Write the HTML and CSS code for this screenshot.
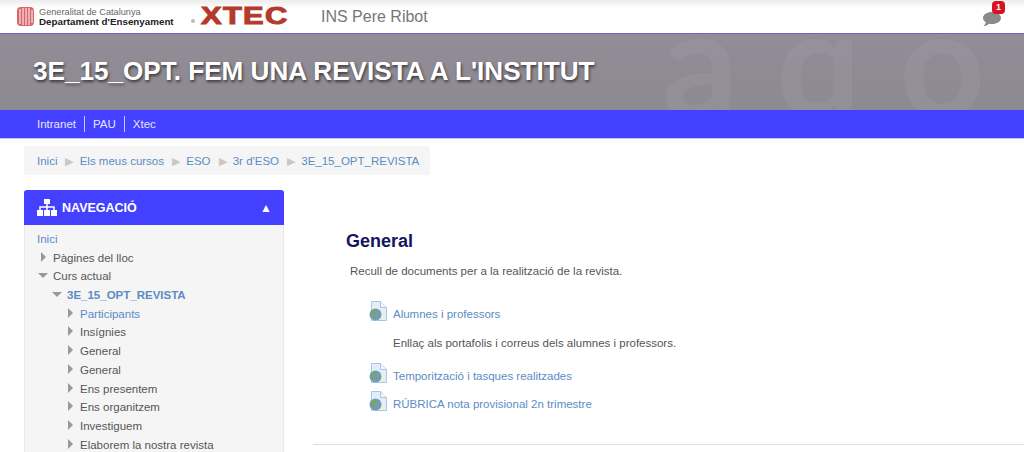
FILE: index.html
```html
<!DOCTYPE html>
<html>
    <head>
        <meta name="viewport" content="width=device-width">
        <title>3E_15_OPT. Fem una revista a l'institut</title>
        <link rel="stylesheet" href="styles.css">
    </head>
    <body>
        <div class="topbar">
            <svg class="gene-logo" width="17" height="19" viewBox="0 0 17 19">
                <rect x="0" y="0" width="17" height="19" rx="4" fill="#d9646a"/>
                <path d="M3 2v15M6 1v17M9 1v17M12 1v17M15 3v13" stroke="#fff" stroke-width="1" fill="none"/>
            </svg>
            <div class="gene-text">
                <div>Generalitat de Catalunya</div>
                <div class="gene-dept">Departament d'Ensenyament</div>
            </div>
            <span class="xtec-dot"></span>
            <div class="xtec-logo">XTEC</div>
            <div class="school">INS Pere Ribot</div>
            <div class="notif">
                <svg width="22" height="18" viewBox="0 0 22 18">
                    <path d="M11 3c5 0 9 2.600 9 6s-4 6-9 6c-1 0-2 0-3-.3-1.500 1.500-3.500 2.300-5.500 2.300 1.200-1 2-2.200 2.300-3.700C3 12 2 10.600 2 9c0-3.400 4-6 9-6z" fill="#8a8a8a"/>
                </svg>
                <span class="notif-badge">1</span>
            </div>
        </div>

        <div class="banner">
            <h1>3E_15_OPT. FEM UNA REVISTA A L'INSTITUT</h1>
            <div class="banner-deco" aria-hidden="true">
                <span>a</span><span>ɑ</span><span>o</span>
            </div>
        </div>

        <div class="nav">
            <a href="#">Intranet</a>
            <a href="#">PAU</a>
            <a href="#">Xtec</a>
        </div>

        <div class="breadcrumb">
            <a href="#">Inici</a><span class="sep">&#9654;</span>
            <a href="#">Els meus cursos</a><span class="sep">&#9654;</span>
            <a href="#">ESO</a><span class="sep">&#9654;</span>
            <a href="#">3r d'ESO</a><span class="sep">&#9654;</span>
            <a href="#">3E_15_OPT_REVISTA</a>
        </div>

        <div class="page">
            <div class="block">
                <div class="block-head">
                    <svg width="20" height="17" viewBox="0 0 20 17">
                        <path d="M7 0h6v5H7zM0 11h6v6H0zM7 11h6v6H7zM14 11h6v6h-6z" fill="#fff"/>
                        <path d="M10 5v6M3 11V8h14v3" stroke="#fff" stroke-width="1.500" fill="none"/>
                    </svg>
                    <span class="block-title">NAVEGACIÓ</span>
                    <span class="block-toggle">&#9650;</span>
                </div>
                <ul class="tree">
                    <li class="home"><a href="#">Inici</a></li>
                    <li class="closed">Pàgines del lloc</li>
                    <li class="open">Curs actual</li>
                    <li class="open lvl2 course"><a href="#">3E_15_OPT_REVISTA</a></li>
                    <li class="closed lvl3"><a href="#">Participants</a></li>
                    <li class="closed lvl3">Insígnies</li>
                    <li class="closed lvl3">General</li>
                    <li class="closed lvl3">General</li>
                    <li class="closed lvl3">Ens presentem</li>
                    <li class="closed lvl3">Ens organitzem</li>
                    <li class="closed lvl3">Investiguem</li>
                    <li class="closed lvl3">Elaborem la nostra revista</li>
                </ul>
            </div>

            <div class="main">
                <h2>General</h2>
                <p class="summary">Recull de documents per a la realització de la revista.</p>
                <div class="activity first">
                    <svg class="url-icon" width="18" height="20"><use href="#url"/></svg>
                    <a href="#">Alumnes i professors</a>
                </div>
                <p class="activity-desc">Enllaç als portafolis i correus dels alumnes i professors.</p>
                <div class="activity">
                    <svg class="url-icon" width="18" height="20"><use href="#url"/></svg>
                    <a href="#">Temporització i tasques realitzades</a>
                </div>
                <div class="activity">
                    <svg class="url-icon" width="18" height="20"><use href="#url"/></svg>
                    <a href="#">RÚBRICA nota provisional 2n trimestre</a>
                </div>
                <div class="main-rule"></div>
            </div>
        </div>

        <svg width="0" height="0" class="defs">
            <symbol id="url" viewBox="0 0 18 20">
                <path d="M2.500.500h9l6 6v13h-15z" fill="#e4eef8" stroke="#a9c6e4"/>
                <path d="M11.500.500v6h6" fill="#f4f8fc" stroke="#a9c6e4"/>
                <circle cx="6.500" cy="13.500" r="6" fill="#6f9cc4"/>
                <path d="M3 10c2-1.500 4-1.500 5.500-.5L7 12l-2 .5 1 3-1.500 2C2.500 16 1.500 12.500 3 10zM9 14l3-1c0 2-1 4-2.500 5z" fill="#7fa25c"/>
            </symbol>
        </svg>
    </body>
</html>
```

FILE: styles.css
```css
html,body{height:452px}
body{
    margin:0;
    font-family:"Liberation Sans",Arial,sans-serif;
    font-size:11.500px;
    color:#555;
    background:#fff;
    overflow:hidden;
}
a{color:#5b8cc4;text-decoration:none}

.topbar
{
    display:flex;
    align-items:center;
    height:33px;
    background:linear-gradient(#ececec,#fff 25%,#fff);
    border-bottom:1px solid #6a64c0;
}
.gene-logo{margin-left:17px;margin-right:5px;flex:none}
.gene-text{font-size:9.200px;line-height:9px;color:#666;width:151px;flex:none;white-space:nowrap}
.gene-dept{font-weight:bold;color:#222;font-size:9.800px}
.xtec-dot{width:4px;height:4px;border-radius:2px;background:#bbb;margin-left:1px;margin-top:9px;flex:none}
.xtec-logo
{
    font-size:23px;
    line-height:23px;
    font-weight:bold;
    color:#b33a2c;
    letter-spacing:1px;
    width:120px;
    margin-left:6px;
    flex:none;
    transform:scaleX(1.340);
    transform-origin:left center;
    -webkit-text-stroke:1px #b33a2c;
}
.school{font-size:16px;color:#777}
.notif{margin-left:auto;margin-right:21px;position:relative;width:22px;height:18px;margin-top:3px}
.notif-badge
{
    position:absolute;
    left:11px;
    top:-8px;
    width:13px;
    height:13px;
    border-radius:4px;
    background:#d8121f;
    color:#fff;
    font-size:9px;
    font-weight:bold;
    line-height:13px;
    text-align:center;
}

.banner
{
    position:relative;
    height:76px;
    overflow:hidden;
    background:linear-gradient(#918c98,#8d8a90);
    display:flex;
    align-items:center;
}
.banner h1
{
    position:relative;
    z-index:1;
    margin:0 0 2px 33px;
    font-size:26.100px;
    font-weight:bold;
    color:#fff;
    text-shadow:1px 2px 3px rgba(0,0,0,.6);
}
.banner-deco
{
    position:absolute;
    left:662px;
    top:-50px;
    display:flex;
    gap:38px;
    font-size:150px;
    line-height:150px;
    font-family:"Lato","DejaVu Sans",sans-serif;
    font-weight:bold;
    color:rgba(255,255,255,.05);
    white-space:nowrap;
}

.nav
{
    display:flex;
    align-items:center;
    height:28px;
    padding-left:37px;
    background:#4440ff;
    border-bottom:1px solid #c9c8f2;
}
.nav a{color:#e6e6ff;line-height:16px;padding-right:8px;margin-right:8px;border-right:1px solid #c8c8ff}
.nav a:last-child{border-right:none}

.breadcrumb
{
    width:382px;
    height:29px;
    line-height:30px;
    margin:7px 0 0 24px;
    padding-left:13px;
    padding-right:11px;
    background:#f5f5f5;
    border-radius:3px;
    white-space:nowrap;
}
.breadcrumb .sep{color:#c8c8c8;font-size:11px;margin:0 3px 0 8px}

.page
{
    display:flex;
    margin-top:15px;
    margin-left:24px;
}
.block{width:260px;flex:none}
.block-head
{
    display:flex;
    align-items:center;
    height:35px;
    padding-left:13px;
    padding-right:12px;
    background:#4440ff;
    border-radius:3px 3px 0 0;
    color:#fff;
}
.block-title{font-size:12.500px;font-weight:bold;margin-left:5px}
.block-toggle{margin-left:auto;font-size:12px}

.tree
{
    list-style:none;
    margin:0;
    padding:5px 0 0 12px;
    height:227px;
    overflow:hidden;
    background:#f5f5f5;
    border:1px solid #eaeaea;
    border-top:none;
    border-bottom:none;
    box-sizing:border-box;
}
.tree li{height:18.700px;line-height:18.700px;position:relative;padding-left:16px}
.tree li.home{padding-left:0}
.tree li::before{content:"";position:absolute;left:4px}
.tree li.closed::before
{
    top:3px;
    border-left:5px solid #999;
    border-top:5px solid transparent;
    border-bottom:5px solid transparent;
}
.tree li.open::before
{
    top:6px;
    left:1px;
    border-top:5px solid #999;
    border-left:5px solid transparent;
    border-right:5px solid transparent;
}
.tree li.home::before{display:none}
.tree li.lvl2{margin-left:14px;padding-left:16px}
.tree li.lvl3{margin-left:27px;padding-left:16px}
.tree li.course a{font-weight:bold}

.main{flex:1;padding:41px 0 0 29px}
.main h2{margin:0 0 0 33px;font-size:18px;line-height:20px;color:#14145f}
.summary{margin:13px 0 0 37px;line-height:14px}
.activity{display:flex;align-items:center;margin-left:56px;height:22px;margin-top:6px}
.activity.first{margin-top:25px}
.url-icon{margin-right:6px;flex:none;position:relative;top:-3px}
.activity-desc{margin:11px 0 15px 80px;line-height:14px}
.main-rule{border-top:1px solid #ddd;margin-top:29px}
.defs{position:absolute}
```
